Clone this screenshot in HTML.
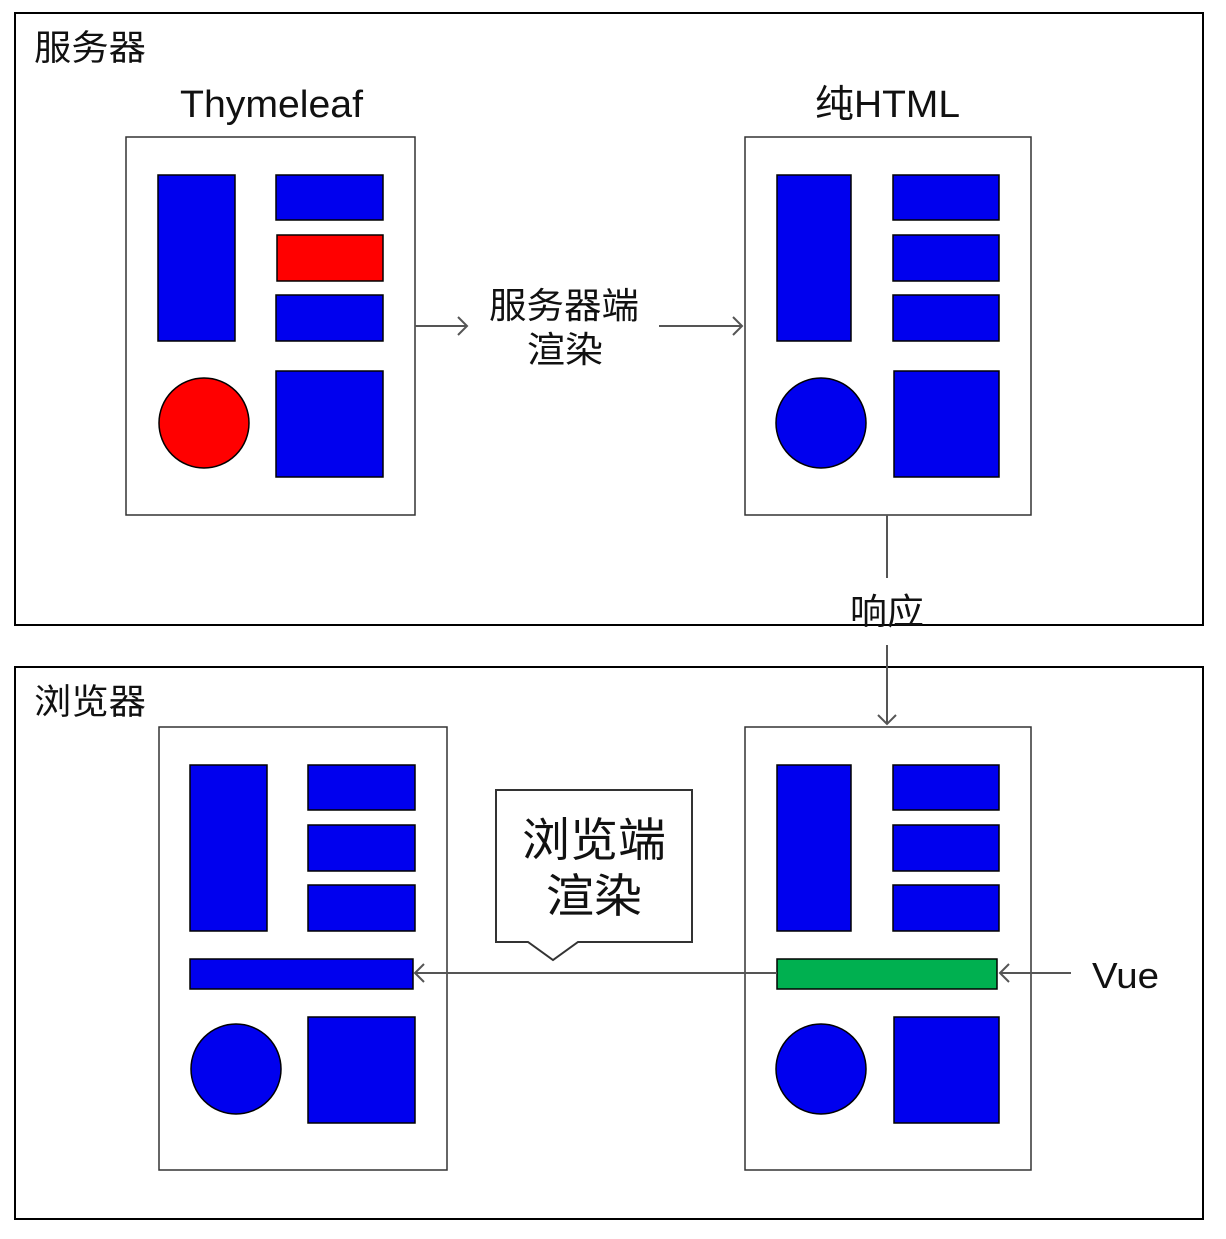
<!DOCTYPE html>
<html><head><meta charset="utf-8"><style>body{margin:0;background:#fff}svg{display:block}text{font-family:"Liberation Sans","Noto Sans CJK SC",sans-serif;fill:#111}</style></head><body>
<svg width="1226" height="1239" viewBox="0 0 1226 1239" xmlns="http://www.w3.org/2000/svg">
<rect x="0" y="0" width="1226" height="1239" fill="#fff"/>
<g fill="none" stroke="#000" stroke-width="2">
<rect x="15" y="13" width="1188" height="612"/>
<rect x="15" y="667" width="1188" height="552"/>
</g>
<g fill="#fff" stroke="#333" stroke-width="1.5">
<rect x="126" y="137" width="289" height="378"/>
<rect x="745" y="137" width="286" height="378"/>
<rect x="159" y="727" width="288" height="443"/>
<rect x="745" y="727" width="286" height="443"/>
</g>
<g stroke="#000" stroke-width="1.5" fill="#0000ee">
<rect x="158" y="175" width="77" height="166"/>
<rect x="276" y="175" width="107" height="45"/>
<rect x="277" y="235" width="106" height="46" fill="#ff0000"/>
<rect x="276" y="295" width="107" height="46"/>
<circle cx="204" cy="423" r="45" fill="#ff0000"/>
<rect x="276" y="371" width="107" height="106"/>

<rect x="777" y="175" width="74" height="166"/>
<rect x="893" y="175" width="106" height="45"/>
<rect x="893" y="235" width="106" height="46"/>
<rect x="893" y="295" width="106" height="46"/>
<circle cx="821" cy="423" r="45"/>
<rect x="894" y="371" width="105" height="106"/>

<rect x="190" y="765" width="77" height="166"/>
<rect x="308" y="765" width="107" height="45"/>
<rect x="308" y="825" width="107" height="46"/>
<rect x="308" y="885" width="107" height="46"/>
<rect x="190" y="959" width="223" height="30"/>
<circle cx="236" cy="1069" r="45"/>
<rect x="308" y="1017" width="107" height="106"/>

<rect x="777" y="765" width="74" height="166"/>
<rect x="893" y="765" width="106" height="45"/>
<rect x="893" y="825" width="106" height="46"/>
<rect x="893" y="885" width="106" height="46"/>
<rect x="777" y="959" width="220" height="30" fill="#00b050"/>
<circle cx="821" cy="1069" r="45"/>
<rect x="894" y="1017" width="105" height="106"/>
</g>
<g stroke="#555" stroke-width="2" fill="none">
<path d="M415 326H467M458 317L467 326L458 335"/>
<path d="M659 326H742M733 317L742 326L733 335"/>
<path d="M887 515V578M887 645V724M878 715L887 724L896 715"/>
<path d="M777 973H415M424 964L415 973L424 982"/>
<path d="M1071 973H1000M1009 964L1000 973L1009 982"/>
</g>
<path d="M496 790H692V942H578L553 960L528 942H496Z" fill="#fff" stroke="#333" stroke-width="2"/>
<text x="34" y="60" font-size="35" textLength="112" lengthAdjust="spacingAndGlyphs">服务器</text>
<text x="34" y="714" font-size="35" textLength="112" lengthAdjust="spacingAndGlyphs">浏览器</text>
<text x="180" y="117" font-size="38" textLength="183" lengthAdjust="spacingAndGlyphs">Thymeleaf</text>
<text x="815" y="117" font-size="38" textLength="145" lengthAdjust="spacingAndGlyphs">纯HTML</text>
<text x="489" y="318" font-size="36" textLength="150" lengthAdjust="spacingAndGlyphs">服务器端</text>
<text x="527" y="362" font-size="36" textLength="76" lengthAdjust="spacingAndGlyphs">渲染</text>
<text x="850" y="624" font-size="36" textLength="74" lengthAdjust="spacingAndGlyphs">响应</text>
<text x="522" y="856" font-size="46" textLength="144" lengthAdjust="spacingAndGlyphs">浏览端</text>
<text x="546" y="912" font-size="46" textLength="96" lengthAdjust="spacingAndGlyphs">渲染</text>
<text x="1092" y="988" font-size="36" textLength="67" lengthAdjust="spacingAndGlyphs">Vue</text>
</svg>
</body></html>
